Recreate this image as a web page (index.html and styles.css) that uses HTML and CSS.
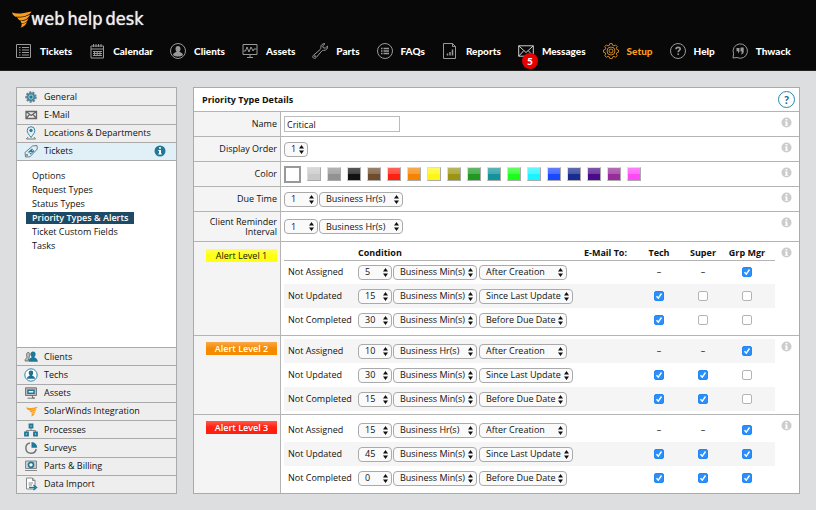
FILE: index.html
```html
<!DOCTYPE html>
<html lang="en">
<head>
    <meta charset="UTF-8">
    <title>Web Help Desk - Priority Types &amp; Alerts</title>
    <link rel="stylesheet" href="styles.css">
</head>
<body>
    <svg class="sprite" aria-hidden="true">
        <symbol id="info" viewBox="0 0 12 12"><circle cx="6" cy="6" r="5.5" fill="currentColor"/><path d="M5 2.2h2v1.6H5zM4.3 5H7v3.6h.8v1H4.3v-1H5V6h-.7z" fill="#fff"/></symbol>
        <symbol id="swirl" viewBox="0 0 20 17"><path d="M0 1.500C5 3.300 10 2.600 19.500.5 17.500 4 13 6.300 3.500 5.800 1.800 5 .6 3.500 0 1.500zM5 6.300C9 7 14 6 18 3.500 16.500 8 12 9.800 7.500 9.300 6.300 8.400 5.500 7.400 5 6.300zM8.500 9.800c3 .4 5.500-.3 8-2.500-1 3.500-3.800 5.300-7 5zM9.500 12.800c2 0 4-.6 5.500-2-.8 3-3 5-6.500 6 1-1.100 1.400-2.500 1-4z" fill="#f99d1c"/></symbol>
    </svg>
    <header>
        <a class="logo" href="#" aria-label="web help desk">
            <svg class="logo-mark"><use href="#swirl"/></svg>
            <span>web</span><span>help</span><span>desk</span>
        </a>
        <nav class="top-nav">
            <a href="#"><svg viewBox="0 0 16 16"><path d="M.5 1.500h14v13H.5zM3 4.500h1.500M3 7h1.500M3 9.500h1.500M3 12h1.500M6 4.500h7M6 7h7M6 9.500h7M6 12h7"/></svg>Tickets</a>
            <a href="#"><svg viewBox="0 0 16 16"><path d="M2 3h12.500v12H2zM2 6h12.500M4.500 1v3M7 1v3M9.500 1v3M12 1v3M4 8.500h9M4 10.500h9M4 12.500h9M5.500 8v5M8.200 8v5M11 8v5"/></svg>Calendar</a>
            <a href="#"><svg viewBox="0 0 16 16"><circle cx="8" cy="8" r="7.500"/><path class="fill" d="M8 3c1.700 0 2.500 1.200 2.500 2.700 0 1.300-.5 2.300-1.200 2.900.6 1 3.200.9 3.700 3.400-2.500 2-7.500 2-10 0 .5-2.500 3.100-2.400 3.700-3.400C6 8 5.500 7 5.500 5.700 5.500 4.200 6.300 3 8 3z"/></svg>Clients</a>
            <a href="#"><svg viewBox="0 0 16 16"><path d="M1 1.500h14v10H1zM8 11.500V14M5 14.500h6M1.500 8h2l1.500-4 2 5 2-5 2 4 1-2h2.500"/></svg>Assets</a>
            <a href="#"><svg viewBox="0 0 16 16"><path d="M13 .8c-2-.6-4.500 1-4.200 3.800.1.8 0 1.300-.6 1.900L1.300 12.400c-.9 1-.6 2 .1 2.600s1.800.6 2.600-.3L9.800 8c.5-.6 1-.7 1.900-.6 2.700.2 4.300-2.200 3.800-4.300L13.200 5.200l-2-.5-.5-1.800z"/><circle cx="3" cy="13.200" r=".6"/></svg>Parts</a>
            <a href="#"><svg viewBox="0 0 16 16"><circle cx="8" cy="8" r="7.500"/><path d="M4 5.500h1.500M4 8h1.500M4 10.500h1.500M6.500 5.500H12M6.500 8H12M6.500 10.500H12" stroke-width="1.500"/></svg>FAQs</a>
            <a href="#"><svg viewBox="0 0 16 16"><path d="M1.500.5h9l3 3v12h-12zM10.500.5v3h3"/><path d="M5.500 12.500v-2M8 12.500V9M10.500 12.500v-6" stroke-width="1.500"/></svg>Reports</a>
            <a href="#"><span class="mail"><svg viewBox="0 0 16 16"><path d="M.7 2.800h14.600v10.400H.7zM.7 2.800L8 9.500l7.300-6.700M.7 13.200l5-5.500M15.300 13.200l-5-5.500"/></svg><b class="count">5</b></span>Messages</a>
            <a href="#" class="current"><svg viewBox="0 0 16 16"><path d="M6.800.6h2.400l.5 1.800 1.300.5 1.600-.9 1.600 1.600-.9 1.600.5 1.300 1.700.5v2.200l-1.700.5-.5 1.400.9 1.600-1.600 1.600-1.600-.9-1.300.5-.5 1.700H6.800l-.5-1.700-1.300-.5-1.600.9-1.600-1.600.9-1.600-.5-1.400-1.700-.5V7l1.700-.5.5-1.300-.9-1.600L3.400 2l1.600.9 1.300-.5z"/><circle cx="8" cy="8" r="4"/><circle cx="8" cy="8" r="2"/></svg>Setup</a>
            <a href="#"><svg viewBox="0 0 16 16"><circle cx="8" cy="8" r="7.500"/><path d="M6 6.200C6 3.800 10.200 3.800 10.200 6c0 1.500-2 1.400-2 3.200M8.200 10.500v1.600" stroke-width="1.600"/></svg>Help</a>
            <a href="#"><svg viewBox="0 0 16 16"><path d="M1 15l.6-4.200A7.200 7.200 0 1 1 5 14.500z"/><path class="fill" d="M4.500 5h3v3.500L6 10.500V8.200H4.500zM8.500 4.500h3.200V9c0 1.500-1.500 2.500-3.200 2.500 1-.8 1.400-1.600 1.300-3H8.500z"/></svg>Thwack</a>
        </nav>
    </header>

    <div class="page">
        <aside class="sidebar">
            <a class="item" href="#"><svg viewBox="0 0 14 14"><circle cx="7" cy="7" r="4.700" fill="#8aa0aa" stroke="#6d7e86" stroke-width="2" stroke-dasharray="2 1.300"/><circle cx="7" cy="7" r="3.300" fill="#8fc0d5" stroke="#1f7898"/><circle cx="7" cy="7" r="1.500" fill="#1f7898"/></svg>General</a>
            <a class="item" href="#"><svg viewBox="0 0 14 14" fill="none" stroke="#666" stroke-width="1.300"><path d="M2 3.500h10.500v7H2zM2 3.500l5.200 4 5.300-4M2 10.500l3.500-4M12.500 10.500L9 6.500"/></svg>E-Mail</a>
            <a class="item" href="#"><svg viewBox="0 0 14 14" fill="none" stroke="#2b86a8"><path d="M7 11.500C5 8.500 3.200 7 3.200 4.500a3.800 3.800 0 0 1 7.600 0C10.800 7 9 8.500 7 11.500z"/><circle cx="7" cy="4.500" r="1.300" fill="#1f7898"/><path d="M4 11L2.500 13h9L10 11" stroke="#777"/></svg>Locations &amp; Departments</a>
            <a class="item open" href="#"><svg viewBox="0 0 14 14" fill="none" stroke="#778"><path d="M1 8.500L8.500 2l4.500-.5.300 3.500L6 12.800l-4.500.2z"/><path d="M4.500 8.500l4-3.500M6 10l4-3.500M6.500 6l2 2.500" stroke="#1f7fa0" stroke-width="1.500"/><circle cx="3" cy="11" r=".7"/></svg>Tickets<svg class="open-info"><use href="#info"/></svg></a>
            <div class="submenu">
                <a href="#">Options</a>
                <a href="#">Request Types</a>
                <a href="#">Status Types</a>
                <a href="#" class="selected">Priority Types &amp; Alerts</a>
                <a href="#">Ticket Custom Fields</a>
                <a href="#">Tasks</a>
            </div>
            <a class="item" href="#"><svg viewBox="0 0 14 14"><path d="M3.800 2.500c2-.5 2.700 2 1.500 4L5 8l-1 3H1C1 8 3 8.500 3.200 7 2 5.500 2.200 3 3.800 2.500z" fill="#bbb" stroke="#777"/><path d="M9 1.500c2 0 2.800 1.500 2.600 3C11.500 5.700 11 6.500 10.400 7c.5 1.300 3.400 1 3.400 4.800H4.500C4.500 8 7.200 8.300 7.700 7 6 5.500 6 1.500 9 1.500z" fill="#1f7898"/></svg>Clients</a>
            <a class="item" href="#"><svg viewBox="0 0 14 14"><circle cx="7" cy="7" r="6.200" fill="#fff" stroke="#2b86a8"/><path d="M7 2.500c3 0 2.500 3.500 1.200 4.700C8.700 8.500 11 8 11 10.800H3C3 8 5.300 8.500 5.800 7.200 4.500 6 4 2.500 7 2.500z" fill="#1f6f90"/></svg>Techs</a>
            <a class="item" href="#"><svg viewBox="0 0 14 14"><path d="M1.500 1.800h11v7.700h-11zM5.500 9.500h3V12H11M3.500 12.200h7" fill="#bbb" stroke="#777"/><path d="M4 4.200h6v3H4z" fill="#fff" stroke="#1f7898" stroke-width="1.500"/></svg>Assets</a>
            <a class="item" href="#"><svg><use href="#swirl" x="2" y="2" width="12" height="11"/></svg>SolarWinds Integration</a>
            <a class="item" href="#"><svg viewBox="0 0 14 14" fill="none"><path d="M7 5v3M2.500 9.500V7.500h9v2" stroke="#888"/><path d="M5.500 1.500h3v3h-3zM1 9.500h3v3H1zM10 9.500h3v3h-3z" stroke="#1f7898" stroke-width="1.800"/></svg>Processes</a>
            <a class="item" href="#"><svg viewBox="0 0 14 14"><path d="M6 2a5.200 5.200 0 1 0 6.200 6" fill="none" stroke="#777" stroke-width="1.500"/><path d="M7.500 1a5.700 5.700 0 0 1 5.700 5.700H7.500z" fill="#1f7898"/></svg>Surveys</a>
            <a class="item" href="#"><svg viewBox="0 0 14 14"><path d="M1.500 2h11v7.500h-11zM1 11.500h12" fill="#ccc" stroke="#888"/><circle cx="7" cy="5.800" r="2.500" fill="#fff" stroke="#1f7898" stroke-width="1.700"/></svg>Parts &amp; Billing</a>
            <a class="item" href="#"><svg viewBox="0 0 14 14"><path d="M2.500 1h6L11 3.500V12H2.500zM8.500 1v2.500H11M4.500 6H9M4.500 8H8" fill="#fff" stroke="#888"/><path d="M5 10.500h6M9.500 8l3 2.500-3 2.500" fill="none" stroke="#1f7898" stroke-width="1.500"/></svg>Data Import</a>
        </aside>

        <form class="panel">
            <div class="panel-head">
                <h1>Priority Type Details</h1>
                <button type="button" class="help" aria-label="Help">?</button>
            </div>
            <div class="row">
                <label class="name" for="name">Name</label>
                <div class="field"><input type="text" id="name" value="Critical"></div>
                <svg class="info"><use href="#info"/></svg>
            </div>
            <div class="row">
                <label class="name" for="order">Display Order</label>
                <div class="field"><select id="order" class="tiny"><option>1</option></select></div>
                <svg class="info"><use href="#info"/></svg>
            </div>
            <div class="row">
                <span class="name" id="color-label">Color</span>
                <div class="field swatches" role="radiogroup" aria-labelledby="color-label">
                    <input type="radio" name="color" class="white" aria-label="White" checked>
                    <input type="radio" name="color" class="silver" aria-label="Silver">
                    <input type="radio" name="color" class="gray" aria-label="Gray">
                    <input type="radio" name="color" class="black" aria-label="Black">
                    <input type="radio" name="color" class="brown" aria-label="Brown">
                    <input type="radio" name="color" class="red" aria-label="Red">
                    <input type="radio" name="color" class="orange" aria-label="Orange">
                    <input type="radio" name="color" class="yellow" aria-label="Yellow">
                    <input type="radio" name="color" class="olive" aria-label="Olive">
                    <input type="radio" name="color" class="green" aria-label="Green">
                    <input type="radio" name="color" class="teal" aria-label="Teal">
                    <input type="radio" name="color" class="lime" aria-label="Lime">
                    <input type="radio" name="color" class="cyan" aria-label="Cyan">
                    <input type="radio" name="color" class="blue" aria-label="Blue">
                    <input type="radio" name="color" class="navy" aria-label="Navy">
                    <input type="radio" name="color" class="indigo" aria-label="Indigo">
                    <input type="radio" name="color" class="purple" aria-label="Purple">
                    <input type="radio" name="color" class="pink" aria-label="Pink">
                </div>
                <svg class="info"><use href="#info"/></svg>
            </div>
            <div class="row">
                <label class="name" for="due">Due Time</label>
                <div class="field"><select id="due" class="num"><option>1</option></select><select class="unit" aria-label="Due time unit"><option>Business Hr(s)</option></select></div>
                <svg class="info"><use href="#info"/></svg>
            </div>
            <div class="row tall">
                <label class="name" for="reminder">Client Reminder Interval</label>
                <div class="field"><select id="reminder" class="num"><option>1</option></select><select class="unit" aria-label="Reminder unit"><option>Business Hr(s)</option></select></div>
                <svg class="info"><use href="#info"/></svg>
            </div>

            <div class="row alert">
                <div class="name"><span class="level level-1">Alert Level 1</span></div>
                <table>
                    <thead>
                        <tr><th class="state"></th><th class="cond">Condition</th><th class="mailto">E-Mail To:</th><th class="who">Tech</th><th class="who">Super</th><th class="mgr">Grp Mgr</th></tr>
                    </thead>
                    <tbody>
                        <tr>
                            <td class="state">Not Assigned</td>
                            <td colspan="2"><div class="selects"><select class="num" aria-label="Amount"><option>5</option></select><select class="unit" aria-label="Unit"><option>Business Min(s)</option></select><select class="when" aria-label="Event"><option>After Creation</option></select></div></td>
                            <td class="who">–</td>
                            <td class="who">–</td>
                            <td class="mgr"><input type="checkbox" aria-label="Grp Mgr" checked></td>
                        </tr>
                        <tr class="shade">
                            <td class="state">Not Updated</td>
                            <td colspan="2"><div class="selects"><select class="num" aria-label="Amount"><option>15</option></select><select class="unit" aria-label="Unit"><option>Business Min(s)</option></select><select class="when wide" aria-label="Event"><option>Since Last Update</option></select></div></td>
                            <td class="who"><input type="checkbox" aria-label="Tech" checked></td>
                            <td class="who"><input type="checkbox" aria-label="Super"></td>
                            <td class="mgr"><input type="checkbox" aria-label="Grp Mgr"></td>
                        </tr>
                        <tr>
                            <td class="state">Not Completed</td>
                            <td colspan="2"><div class="selects"><select class="num" aria-label="Amount"><option>30</option></select><select class="unit" aria-label="Unit"><option>Business Min(s)</option></select><select class="when" aria-label="Event"><option>Before Due Date</option></select></div></td>
                            <td class="who"><input type="checkbox" aria-label="Tech" checked></td>
                            <td class="who"><input type="checkbox" aria-label="Super"></td>
                            <td class="mgr"><input type="checkbox" aria-label="Grp Mgr"></td>
                        </tr>
                    </tbody>
                </table>
                <svg class="info"><use href="#info"/></svg>
            </div>

            <div class="row alert plain">
                <div class="name"><span class="level level-2">Alert Level 2</span></div>
                <table>
                    <tbody>
                        <tr class="shade">
                            <td class="state">Not Assigned</td>
                            <td><div class="selects"><select class="num" aria-label="Amount"><option>10</option></select><select class="unit" aria-label="Unit"><option>Business Hr(s)</option></select><select class="when" aria-label="Event"><option>After Creation</option></select></div></td>
                            <td class="who">–</td>
                            <td class="who">–</td>
                            <td class="mgr"><input type="checkbox" aria-label="Grp Mgr" checked></td>
                        </tr>
                        <tr>
                            <td class="state">Not Updated</td>
                            <td><div class="selects"><select class="num" aria-label="Amount"><option>30</option></select><select class="unit" aria-label="Unit"><option>Business Min(s)</option></select><select class="when wide" aria-label="Event"><option>Since Last Update</option></select></div></td>
                            <td class="who"><input type="checkbox" aria-label="Tech" checked></td>
                            <td class="who"><input type="checkbox" aria-label="Super" checked></td>
                            <td class="mgr"><input type="checkbox" aria-label="Grp Mgr"></td>
                        </tr>
                        <tr class="shade">
                            <td class="state">Not Completed</td>
                            <td><div class="selects"><select class="num" aria-label="Amount"><option>15</option></select><select class="unit" aria-label="Unit"><option>Business Min(s)</option></select><select class="when" aria-label="Event"><option>Before Due Date</option></select></div></td>
                            <td class="who"><input type="checkbox" aria-label="Tech" checked></td>
                            <td class="who"><input type="checkbox" aria-label="Super" checked></td>
                            <td class="mgr"><input type="checkbox" aria-label="Grp Mgr"></td>
                        </tr>
                    </tbody>
                </table>
                <svg class="info"><use href="#info"/></svg>
            </div>

            <div class="row alert plain">
                <div class="name"><span class="level level-3">Alert Level 3</span></div>
                <table>
                    <tbody>
                        <tr>
                            <td class="state">Not Assigned</td>
                            <td><div class="selects"><select class="num" aria-label="Amount"><option>15</option></select><select class="unit" aria-label="Unit"><option>Business Hr(s)</option></select><select class="when" aria-label="Event"><option>After Creation</option></select></div></td>
                            <td class="who">–</td>
                            <td class="who">–</td>
                            <td class="mgr"><input type="checkbox" aria-label="Grp Mgr" checked></td>
                        </tr>
                        <tr class="shade">
                            <td class="state">Not Updated</td>
                            <td><div class="selects"><select class="num" aria-label="Amount"><option>45</option></select><select class="unit" aria-label="Unit"><option>Business Min(s)</option></select><select class="when wide" aria-label="Event"><option>Since Last Update</option></select></div></td>
                            <td class="who"><input type="checkbox" aria-label="Tech" checked></td>
                            <td class="who"><input type="checkbox" aria-label="Super" checked></td>
                            <td class="mgr"><input type="checkbox" aria-label="Grp Mgr" checked></td>
                        </tr>
                        <tr>
                            <td class="state">Not Completed</td>
                            <td><div class="selects"><select class="num" aria-label="Amount"><option>0</option></select><select class="unit" aria-label="Unit"><option>Business Min(s)</option></select><select class="when" aria-label="Event"><option>Before Due Date</option></select></div></td>
                            <td class="who"><input type="checkbox" aria-label="Tech" checked></td>
                            <td class="who"><input type="checkbox" aria-label="Super" checked></td>
                            <td class="mgr"><input type="checkbox" aria-label="Grp Mgr" checked></td>
                        </tr>
                    </tbody>
                </table>
                <svg class="info"><use href="#info"/></svg>
            </div>
        </form>
    </div>
</body>
</html>
```
FILE: styles.css
```css
* {
    box-sizing: border-box;
}
body {
    margin: 0;
    background: #dddee0;
    color: #111;
    font-family: "Open Sans", "Liberation Sans", sans-serif;
    font-size: 9px;
    line-height: 12px;
}
a {
    color: inherit;
    text-decoration: none;
}
svg {
    flex: none;
}
.sprite {
    display: none;
}

/* header */
header {
    background: #080808;
    border-bottom: 1px solid #222;
    padding: 8px 16px 11px 12px;
}
.logo {
    display: flex;
    align-items: center;
    gap: 3px;
    height: 22px;
    color: #eee;
    font-family: "DejaVu Sans Condensed", "DejaVu Sans", sans-serif;
    font-size: 18px;
    line-height: 22px;
    text-shadow: 0 0 1px #eee;
}
.logo-mark {
    width: 20px;
    height: 17px;
    margin-right: -4px;
}
.top-nav {
    display: flex;
    gap: 17px;
    padding: 13px 0 0 4px;
}
.top-nav a {
    display: flex;
    align-items: center;
    gap: 8px;
    height: 16px;
    color: #fff;
    font-family: Lato, "Liberation Sans", sans-serif;
    font-size: 10px;
    font-weight: 900;
    white-space: nowrap;
}
.top-nav svg {
    display: block;
    width: 16px;
    height: 16px;
    fill: none;
    stroke: #999;
}
.top-nav .fill {
    fill: #999;
    stroke: none;
}
.top-nav .current {
    color: #f99d1c;
}
.top-nav .current svg {
    stroke: #c98420;
}
.mail {
    position: relative;
}
.top-nav .mail svg {
    stroke: #ccc;
}
.count {
    position: absolute;
    left: 4px;
    top: 10px;
    width: 16px;
    height: 16px;
    border-radius: 50%;
    background: #e80000;
    font-size: 10px;
    line-height: 16px;
    text-align: center;
}

/* layout */
.page {
    display: flex;
    gap: 16px;
    padding: 16px;
}
.sidebar {
    flex: none;
    display: flex;
    flex-direction: column;
    width: 161px;
    background: #fff;
    border: 1px solid #aaa;
}
.item {
    flex: 1;
    display: flex;
    align-items: center;
    gap: 6px;
    padding: 0 10px 0 7px;
    background: #eee;
    border-bottom: 1px solid #aaa;
}
.item:last-child {
    border-bottom: 0;
}
.item svg {
    width: 14px;
    height: 14px;
}
.item.open {
    background: #e0f0f6;
}
.item .open-info {
    width: 12px;
    height: 12px;
    margin-left: auto;
    color: #1f7898;
}
.submenu {
    display: flex;
    flex-direction: column;
    align-items: flex-start;
    gap: 2px;
    height: 187px;
    padding: 9px;
    border-bottom: 1px solid #aaa;
}
.submenu a {
    padding: 0 6px;
}
.submenu .selected {
    background: #1d4b66;
    color: #fff;
    font-weight: 600;
}

/* detail panel */
.panel {
    flex: 1;
    min-width: 0;
    background: #fff;
    border: 1px solid #aaa;
}
.panel-head {
    display: flex;
    align-items: center;
    justify-content: space-between;
    height: 24px;
    padding: 0 4px 0 8px;
    border-bottom: 1px solid #b4b4b4;
}
h1 {
    margin: 0;
    font-size: 9px;
    font-weight: 700;
}
.help {
    width: 17px;
    height: 17px;
    padding: 0;
    border: 1px solid #2b86a8;
    border-radius: 50%;
    background: #fff;
    color: #1f6f90;
    font: 900 11px Lato, sans-serif;
}
.row {
    display: flex;
    min-height: 25px;
    border-bottom: 1px solid #b4b4b4;
}
.row:last-child {
    border-bottom: 0;
}
.row.tall {
    min-height: 30px;
}
.name {
    flex: none;
    display: flex;
    align-items: center;
    justify-content: flex-end;
    width: 87px;
    padding: 0 3px 0 8px;
    background: #f4f4f4;
    border-right: 1px solid #b4b4b4;
    text-align: right;
    line-height: 10px;
}
.field {
    flex: 1;
    display: flex;
    align-items: center;
    gap: 1px;
    padding-left: 3px;
}
.info {
    width: 11px;
    height: 11px;
    margin: 5px 7px 0 6px;
    color: #ccc;
}
input[type="text"] {
    width: 116px;
    height: 16px;
    padding: 0 2px;
    border: 1px solid #bbb;
    font: inherit;
    color: inherit;
}
select {
    appearance: none;
    height: 15px;
    padding: 0 9px 0 6px;
    border: 1px solid #aaa;
    border-radius: 4px;
    background: #fafafa url("data:image/svg+xml,%3Csvg xmlns='http://www.w3.org/2000/svg' width='5' height='9'%3E%3Cpath d='M2.500 0L5 3.500H0zM2.500 9L0 5.500h5z' fill='%23111'/%3E%3C/svg%3E") no-repeat right 3px center;
    color: inherit;
    font: inherit;
}
.tiny {
    width: 24px;
}
.num {
    width: 34px;
}
.unit {
    width: 84px;
}
.when {
    width: 88px;
    margin-left: 1px;
}
.when.wide {
    width: 94px;
}

/* colour swatches */
.field.swatches {
    gap: 6px;
}
.swatches input {
    appearance: none;
    width: 14px;
    height: 14px;
    margin: 0;
    border: 1px solid;
    border-color: #ddd #aaa #aaa #ddd;
    background-image: linear-gradient(rgba(255,255,255,0.3), rgba(255,255,255,0.2) 50%, transparent 50%);
}
.swatches input:checked {
    width: 17px;
    height: 17px;
    border: 2px solid #999;
}
.white { background-color: #fff; }
.silver { background-color: #c8c8c8; }
.gray { background-color: #929292; }
.black { background-color: #111; }
.brown { background-color: #6f4c2c; }
.red { background-color: #ff2010; }
.orange { background-color: #f58500; }
.yellow { background-color: #fff712; }
.olive { background-color: #9b9512; }
.green { background-color: #1f9922; }
.teal { background-color: #15939b; }
.lime { background-color: #1aff1a; }
.cyan { background-color: #1af4ff; }
.blue { background-color: #1a48ff; }
.navy { background-color: #182c90; }
.indigo { background-color: #4b0a8a; }
.purple { background-color: #982c9b; }
.pink { background-color: #ff48f8; }

/* alert levels */
.alert .name {
    align-items: flex-start;
    padding: 7px 3px 0 0;
}
.alert.plain .name {
    padding-top: 6px;
}
.level {
    width: 71px;
    height: 13px;
    line-height: 13px;
    text-align: center;
}
.level-1 {
    background: linear-gradient(#ffff58, #ffff10 50%);
}
.level-2 {
    background: linear-gradient(#f8a848, #f58a00 50%);
    color: #fff;
    font-weight: 600;
}
.level-3 {
    background: linear-gradient(#ff5a48, #ff2010 50%);
    color: #fff;
    font-weight: 600;
}
table {
    flex: 1;
    table-layout: fixed;
    margin: 0 0 3px 3px;
    border-collapse: collapse;
}
.plain table {
    margin-top: 3px;
}
th {
    height: 18px;
    padding: 4px 0 0;
    border-bottom: 1px solid #b4b4b4;
    font-weight: 700;
    line-height: 12px;
}
td {
    height: 24px;
    padding: 0;
}
.shade {
    background: #f5f5f5;
}
.state {
    width: 74px;
    padding-left: 4px;
}
.cond {
    width: 150px;
    padding-right: 134px;
}
.mailto {
    padding-right: 10px;
    text-align: right;
}
.who {
    width: 44px;
    text-align: center;
}
.mgr {
    width: 50px;
    padding-right: 6px;
    text-align: center;
    white-space: nowrap;
}
.selects {
    display: flex;
    gap: 1px;
}
input[type="checkbox"] {
    appearance: none;
    display: block;
    width: 10px;
    height: 10px;
    margin: 0 auto;
    border: 1px solid #b4b4b4;
    border-radius: 2px;
    background: #fff;
}
input[type="checkbox"]:checked {
    border-color: #2388f5;
    background: #2b8ffb url("data:image/svg+xml,%3Csvg xmlns='http://www.w3.org/2000/svg' width='8' height='8'%3E%3Cpath d='M1.500 4.200l1.800 2L6.500 1.500' fill='none' stroke='%23fff' stroke-width='1.400'/%3E%3C/svg%3E") center;
}
```
